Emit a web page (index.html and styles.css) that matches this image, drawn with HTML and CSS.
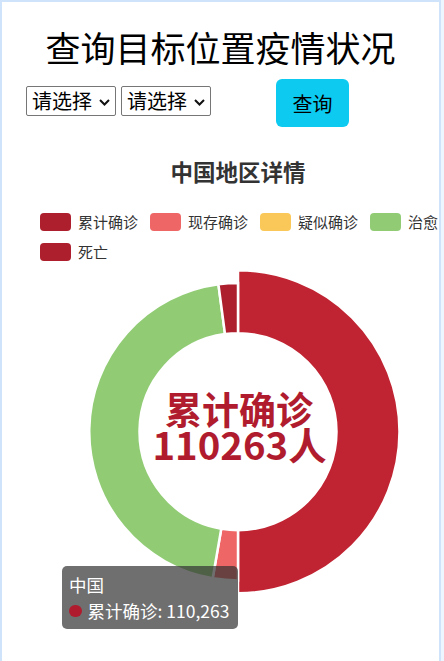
FILE: index.html
```html
<!DOCTYPE html>
<html lang="zh">
<head>
<meta charset="utf-8">
<title>查询目标位置疫情状况</title>
<link rel="stylesheet" href="styles.css">
</head>
<body>
<div class="page">
  <h1 class="title">查询目标位置疫情状况</h1>
  <div class="controls">
    <select class="picker"><option>请选择</option></select>
    <select class="picker"><option>请选择</option></select>
    <button class="query" type="button">查询</button>
  </div>
  <div class="chart">
    <div class="chart-title">中国地区详情</div>
    <div class="legend">
      <div class="legend-item"><span class="swatch sw-total"></span><span class="legend-text">累计确诊</span></div>
      <div class="legend-item"><span class="swatch sw-now"></span><span class="legend-text">现存确诊</span></div>
      <div class="legend-item"><span class="swatch sw-suspect"></span><span class="legend-text">疑似确诊</span></div>
      <div class="legend-item"><span class="swatch sw-cured"></span><span class="legend-text">治愈</span></div>
      <div class="legend-item"><span class="swatch sw-dead"></span><span class="legend-text">死亡</span></div>
    </div>
    <svg class="donut" width="472" height="340" viewBox="0 0 472 340">
      <path class="seg seg-total" d="M236 9.2 A161.5 161.5 0 0 1 236 332.2 L236 269.2 A98.5 98.5 0 0 0 236 72.2 Z"/>
      <path class="seg seg-now" d="M236 319.45 A148.75 148.75 0 0 1 210.71 317.28 L219.25 267.76 A98.5 98.5 0 0 0 236 269.2 Z"/>
      <path class="seg seg-cured" d="M210.71 317.28 A148.75 148.75 0 0 1 216.41 23.24 L223.03 73.06 A98.5 98.5 0 0 0 219.25 267.76 Z"/>
      <path class="seg seg-dead" d="M216.41 23.24 A148.75 148.75 0 0 1 236 21.95 L236 72.2 A98.5 98.5 0 0 0 223.03 73.06 Z"/>
      <text class="center-label" x="237" y="162.7" textLength="148" lengthAdjust="spacingAndGlyphs">累计确诊</text>
      <text class="center-label" x="237.5" y="199" textLength="174" lengthAdjust="spacingAndGlyphs">110263人</text>
    </svg>
    <div class="tooltip">
      <div class="tip-name">中国</div>
      <div class="tip-row"><span class="tip-dot"></span><span>累计确诊: 110,263</span></div>
    </div>
  </div>
</div>
</body>
</html>
```

FILE: styles.css
```css
html, body {
  margin: 0;
  padding: 0;
}
body {
  padding: 2px 0 0 2px;
  background: linear-gradient(to right, #cfe4fb 441px, #edf5fe 441px);
  font-family: "Noto Sans CJK SC", "Noto Sans", sans-serif;
}
.page {
  width: 437px;
  min-height: 659px;
  background: #ffffff;
  overflow: hidden;
}
.title {
  margin: 0;
  padding-top: 20px;
  font-size: 35px;
  font-weight: normal;
  line-height: 50px;
  text-align: center;
  color: #000000;
}
.controls {
  display: flex;
  align-items: flex-start;
  gap: 5px;
  margin-top: 7px;
  padding-left: 24px;
  height: 48px;
}
.picker {
  -webkit-appearance: none;
  appearance: none;
  margin-top: 7px;
  width: 90px;
  height: 30px;
  padding: 0 0 0 5px;
  font-family: "Noto Sans CJK SC", sans-serif;
  font-size: 20px;
  line-height: 28px;
  color: #000000;
  background-color: #ffffff;
  background-image: url("data:image/svg+xml;utf8,<svg xmlns='http://www.w3.org/2000/svg' width='11' height='7' viewBox='0 0 11 7'><path d='M1 1 L5.5 5.5 L10 1' fill='none' stroke='%23111' stroke-width='2'/></svg>");
  background-repeat: no-repeat;
  background-position: 72px 12px;
  border: 1px solid #767676;
  border-radius: 2px;
}
.query {
  margin-left: 60px;
  width: 73px;
  height: 48px;
  padding: 0;
  border: none;
  border-radius: 6px;
  background: #0dcaf0;
  color: #000000;
  font-family: "Noto Sans CJK SC", sans-serif;
  font-size: 20px;
}
.chart {
  position: relative;
  width: 472px;
  margin-top: 29px;
}
.chart-title {
  text-align: center;
  font-size: 22.5px;
  font-weight: bold;
  line-height: 30px;
  color: #333333;
}
.legend {
  display: flex;
  flex-wrap: wrap;
  column-gap: 12px;
  row-gap: 12px;
  margin-top: 27px;
  padding-left: 38px;
}
.legend-item {
  display: flex;
  align-items: center;
  gap: 7px;
  height: 18px;
}
.swatch {
  display: block;
  width: 31px;
  height: 18px;
  border-radius: 4px;
}
.legend-text {
  font-size: 15px;
  line-height: 18px;
  color: #333333;
}
.sw-total, .sw-dead { background: #ad1f2d; }
.sw-now { background: #ee6666; }
.sw-suspect { background: #fac858; }
.sw-cured { background: #91cc75; }
.donut {
  display: block;
}
.seg {
  stroke: #ffffff;
  stroke-width: 2.5;
}
.seg-total { fill: #c02331; }
.seg-now { fill: #ee6666; }
.seg-cured { fill: #91cc75; }
.seg-dead { fill: #ad1f2d; }
.center-label {
  font-family: "Noto Sans CJK SC", sans-serif;
  font-size: 38px;
  font-weight: bold;
  fill: #b01c2e;
  text-anchor: middle;
}
.tooltip {
  position: absolute;
  left: 60px;
  top: 410px;
  padding: 6px 9px 5px 7px;
  background: rgba(50, 50, 50, 0.7);
  border-radius: 5px;
  color: #ffffff;
  font-size: 17.5px;
  line-height: 26px;
  white-space: nowrap;
}
.tip-row {
  display: flex;
  align-items: center;
}
.tip-dot {
  display: block;
  width: 12.5px;
  height: 12.5px;
  border-radius: 50%;
  background: #b01c2e;
  margin-right: 6px;
}
```
